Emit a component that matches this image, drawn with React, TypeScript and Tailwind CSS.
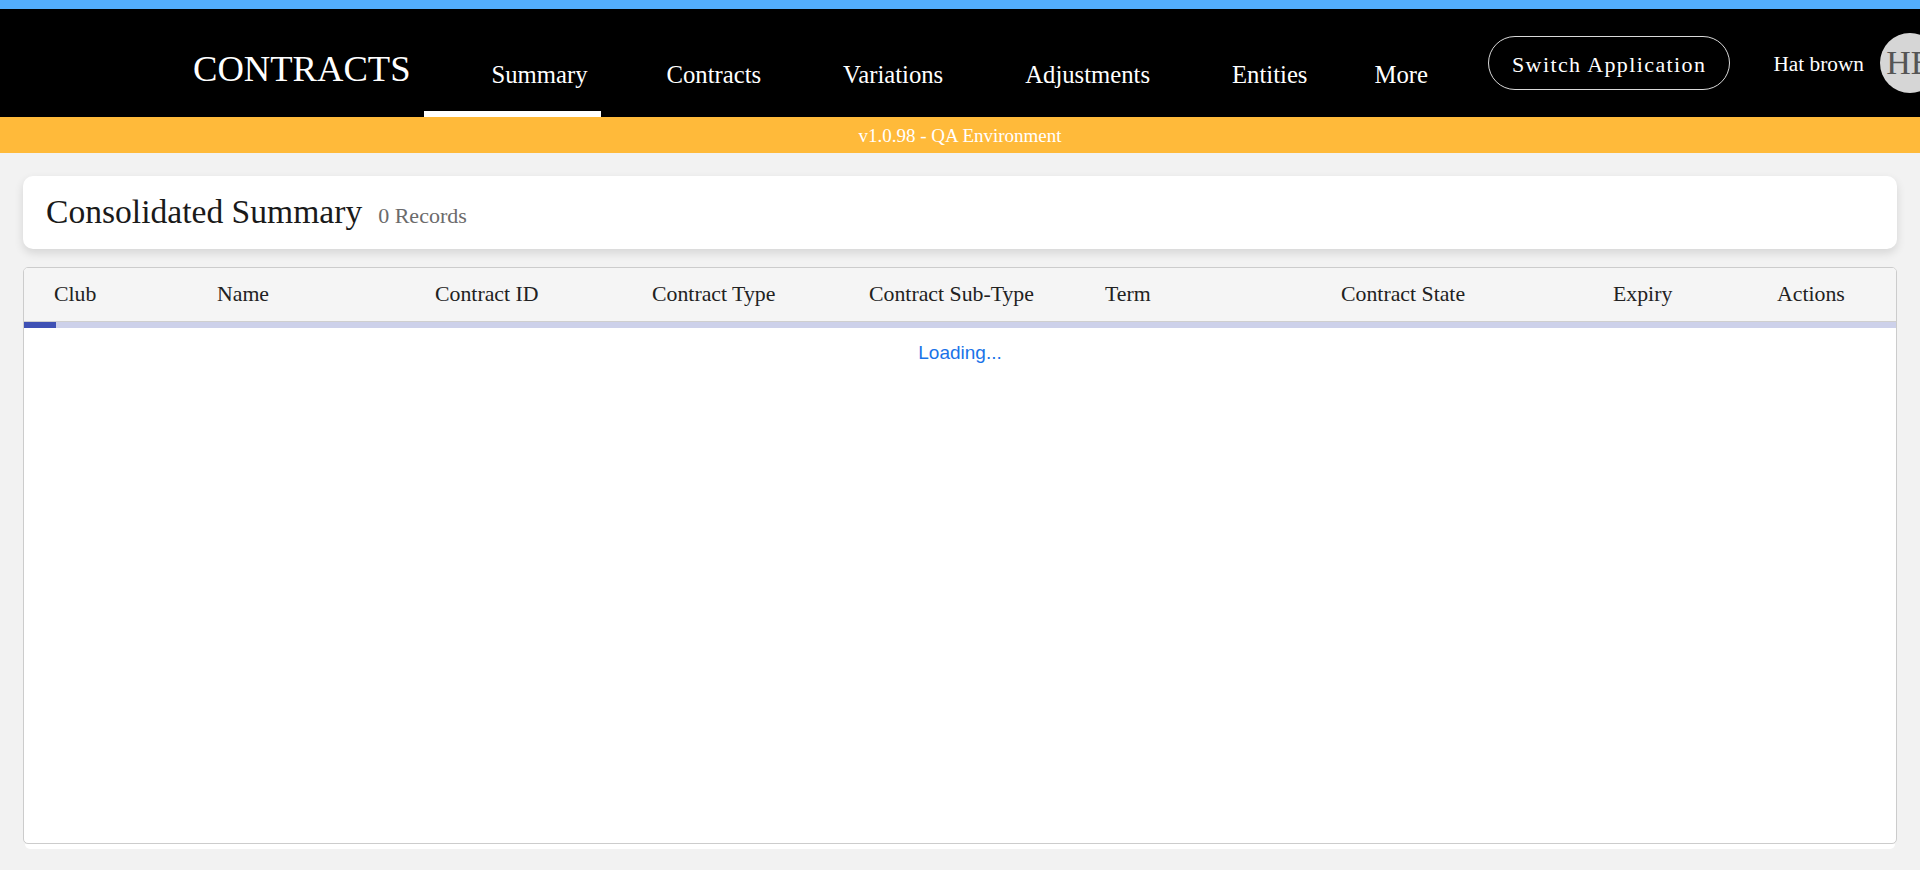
import React from "react";

const serif = { fontFamily: '"Liberation Serif", "Times New Roman", serif' };

const tabs = ["Summary", "Contracts", "Variations", "Adjustments", "Entities"];
const cols = [
  "Club",
  "Name",
  "Contract ID",
  "Contract Type",
  "Contract Sub-Type",
  "Term",
  "Contract State",
  "Expiry",
  "Actions",
];

export default function App() {
  return (
    <div className="min-h-screen w-full bg-[#f2f2f2] overflow-hidden" style={serif}>
      {/* header */}
      <header className="w-full overflow-hidden">
        <div className="h-[9px] w-full bg-[#53aefc]" />
        <div className="h-[108px] w-full bg-black text-white">
          <div className="flex h-full items-start pl-[193px] whitespace-nowrap">
            <div className="mt-[39px] shrink-0 text-[36.6px] leading-[41px]">CONTRACTS</div>
            <nav className="ml-[40px] flex h-full shrink-0 items-stretch">
              {tabs.map((t, i) =>
                i === 0 ? (
                  <div key={t} className="relative h-full shrink-0 pl-[41px] pr-[38px] pt-[52px]">
                    <span className="block text-[24.7px] leading-[28px]">{t}</span>
                    <span className="absolute bottom-0 left-[-26px] h-[6px] w-[177px] bg-white" />
                  </div>
                ) : (
                  <div key={t} className="h-full shrink-0 px-[41px] pt-[52px]">
                    <span className="block text-[24.7px] leading-[28px]">{t}</span>
                  </div>
                )
              )}
              <div className="h-full shrink-0 px-[26px] pt-[52px]">
                <span className="block text-[24.7px] leading-[28px]">More</span>
              </div>
            </nav>
            <button className="ml-[34px] mt-[27px] flex h-[54px] shrink-0 items-center rounded-full border border-[#d9d9d9] px-[23px] pt-[4px] text-[22px] leading-[26px] tracking-[1.4px] text-white">
              Switch Application
            </button>
            <div className="ml-[43px] mt-[43px] shrink-0 text-[21.3px] leading-[24px]">Hat brown</div>
            <div className="ml-[16px] mt-[24px] flex h-[60px] w-[60px] shrink-0 items-center justify-center rounded-full bg-[#d6d6d6] text-[34px] leading-none text-[#555555]">
              HB
            </div>
          </div>
        </div>
        <div className="flex h-[36px] w-full items-start justify-center bg-[#ffba3a] pt-[8px] text-[19px] leading-[22px] text-white">
          v1.0.98 - QA Environment
        </div>
      </header>

      {/* content */}
      <main className="px-[23px] pt-[23px]">
        <section className="flex items-baseline rounded-[10px] bg-white px-[23px] pt-[18px] pb-[19px] shadow-[0_4px_10px_rgba(0,0,0,0.12)]">
          <h1 className="text-[33.6px] leading-[36px] text-[#1a1a1a]">Consolidated Summary</h1>
          <span className="ml-[16px] text-[22px] leading-[24px] text-[#6b6b6b]">0 Records</span>
        </section>

        <section className="mt-[18px]">
          <div className="flex h-[577px] flex-col overflow-hidden rounded-[5px] border border-[#cccccc] bg-white">
            <div className="grid grid-cols-[163px_218px_217px_217px_236px_236px_272px_164px_1fr] border-b border-[#cfcfcf] bg-[#f5f5f5] pl-[30px] pt-[14px] pb-[15px] text-[21.8px] leading-[24px] text-[#222222]">
              {cols.map((c) => (
                <div key={c} className="whitespace-nowrap">
                  {c}
                </div>
              ))}
            </div>
            <div className="relative h-[6px] w-full bg-[#cdd1ea]">
              <div className="absolute left-0 top-0 h-full w-[32px] bg-[#3f51b5]" />
            </div>
            <div
              className="pt-[14px] text-center text-[19px] leading-[21px] text-[#1a73e8]"
              style={{ fontFamily: '"Liberation Sans", Arial, sans-serif' }}
            >
              Loading...
            </div>
          </div>
          <div className="mx-[2px] h-[5px] rounded-b-[6px] bg-white" />
        </section>
      </main>
    </div>
  );
}
